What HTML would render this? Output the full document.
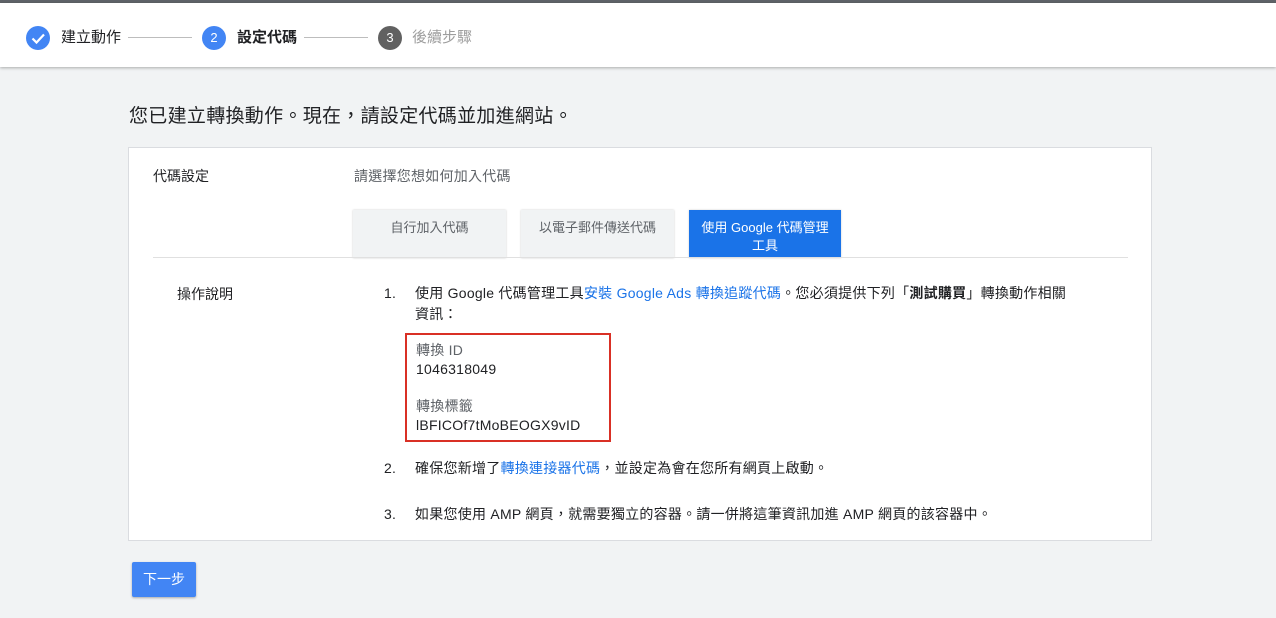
<!DOCTYPE html>
<html><head><meta charset="utf-8"><style>
*{box-sizing:border-box;margin:0;padding:0}
body{width:1276px;height:618px;background:#f1f3f4;font-family:"Liberation Sans","Noto Sans CJK TC",sans-serif;color:#202124;position:relative;overflow:hidden}
.top{position:absolute;left:0;top:0;width:1276px;height:3px;background:#5f6368}
.hdr{position:absolute;left:0;top:3px;width:1276px;height:64px;background:#fff;box-shadow:0 1px 3px rgba(0,0,0,.3)}
.c{position:absolute;top:23px;width:24px;height:24px;border-radius:50%;color:#fff;font-size:13px;text-align:center;line-height:24px}
.st{position:absolute;top:25px;font-size:15px;line-height:20px}
.ln{position:absolute;top:34px;height:1px;background:#bdbdbd}
.ab{position:absolute}
.card{position:absolute;left:128px;top:147px;width:1024px;height:394px;background:#fff;border:1px solid #dadce0}
.tab{position:absolute;top:62px;height:48px;font-size:13px;text-align:center;color:#5f6368;background:#f1f3f4;box-shadow:0 0 2px rgba(0,0,0,.2);padding-top:9px;line-height:18px}
.li{position:absolute;font-size:14px;line-height:21px;letter-spacing:.25px}
a{color:#1a73e8;text-decoration:none}
.g{color:#5f6368}
</style></head><body>
<div class="top"></div>
<div class="hdr">
<div class="c" style="left:26px;background:#4285f4"><svg width="24" height="24"><path d="M6.5 12.5l4 4 7.5-8" stroke="#fff" stroke-width="2.2" fill="none"/></svg></div>
<div class="st" style="left:61px">建立動作</div>
<div class="ln" style="left:128px;width:64px"></div>
<div class="c" style="left:202px;background:#4285f4">2</div>
<div class="st" style="left:237px;font-weight:bold">設定代碼</div>
<div class="ln" style="left:304px;width:64px"></div>
<div class="c" style="left:378px;background:#616161">3</div>
<div class="st" style="left:412px;color:#9e9e9e">後續步驟</div>
</div>
<div class="ab" style="left:129px;top:101px;font-size:19px;letter-spacing:.3px">您已建立轉換動作。現在，請設定代碼並加進網站。</div>
<div class="card">
<div class="ab" style="left:24px;top:18px;font-size:14px">代碼設定</div>
<div class="ab g" style="left:225px;top:18px;font-size:14px;letter-spacing:.25px">請選擇您想如何加入代碼</div>
<div class="tab" style="left:224px;width:153px">自行加入代碼</div>
<div class="tab" style="left:392px;width:153px">以電子郵件傳送代碼</div>
<div class="tab" style="left:560px;width:152px;background:#1a73e8;color:#fff">使用 Google 代碼管理<br>工具</div>
<div class="ab" style="left:24px;top:109px;width:975px;height:1px;background:#e0e0e0"></div>
<div class="ab" style="left:48px;top:136px;font-size:14px">操作說明</div>
<div class="li" style="left:255px;top:135px">1.</div>
<div class="li" style="left:286px;top:135px;width:700px">使用 Google 代碼管理工具<a>安裝 Google Ads 轉換追蹤代碼</a>。您必須提供下列「<b>測試購買</b>」轉換動作相關<br>資訊：</div>
<div class="ab" style="left:276px;top:185px;width:206px;height:109px;border:2px solid #d93025"></div>
<div class="li g" style="left:287px;top:192px">轉換 ID</div>
<div class="li" style="left:287px;top:211px">1046318049</div>
<div class="li g" style="left:287px;top:248px">轉換標籤</div>
<div class="li" style="left:287px;top:267px">lBFICOf7tMoBEOGX9vID</div>
<div class="li" style="left:255px;top:310px">2.</div>
<div class="li" style="left:286px;top:310px">確保您新增了<a>轉換連接器代碼</a>，並設定為會在您所有網頁上啟動。</div>
<div class="li" style="left:255px;top:356px">3.</div>
<div class="li" style="left:286px;top:356px">如果您使用 AMP 網頁，就需要獨立的容器。請一併將這筆資訊加進 AMP 網頁的該容器中。</div>
</div>
<div class="ab" style="left:132px;top:562px;width:64px;height:35px;background:#4285f4;color:#fff;font-size:14px;text-align:center;line-height:35px;box-shadow:0 1px 2px rgba(0,0,0,.3);border-radius:2px">下一步</div>
</body></html>
